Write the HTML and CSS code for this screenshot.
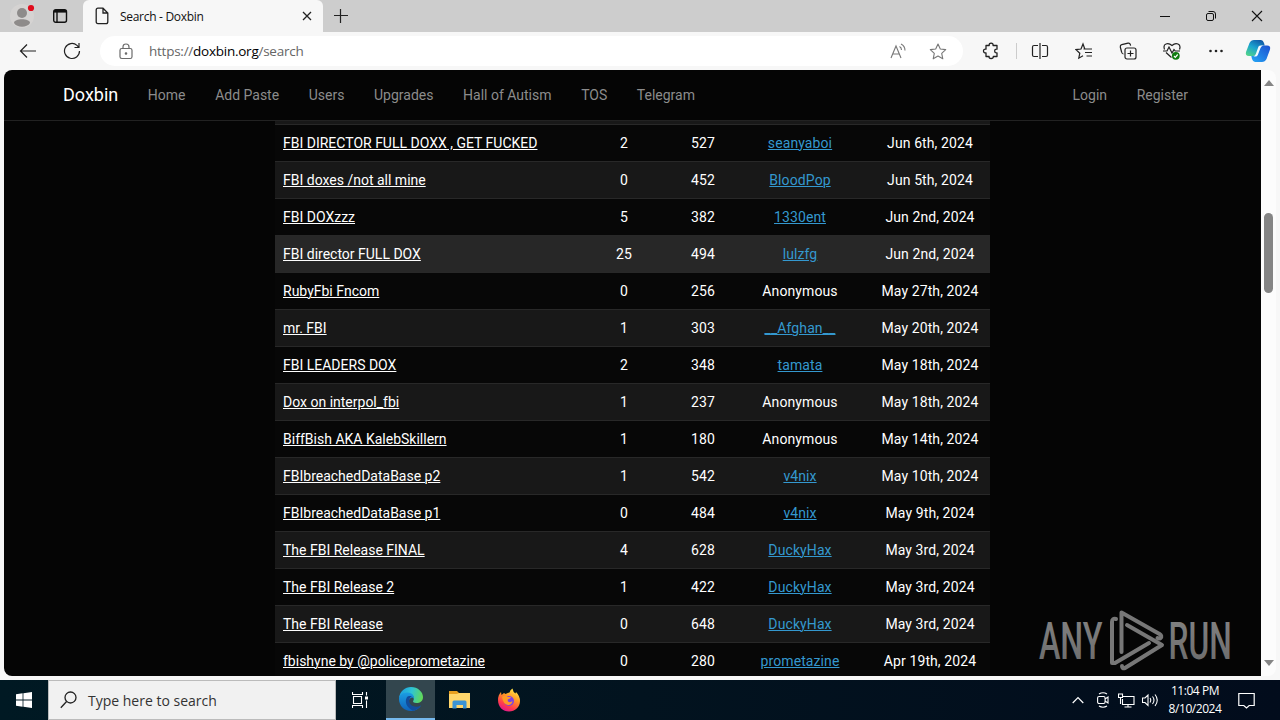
FILE: index.html
```html
<!DOCTYPE html>
<html lang="en">
<head>
    <meta charset="UTF-8">
    <meta name="viewport" content="width=device-width, initial-scale=1.0">
    <title>Search - Doxbin</title>
    <link rel="stylesheet" href="styles.css">
</head>
<body>
    <div class="desktop">
        <!-- Tab strip -->
        <div class="tab-strip">
            <div class="tab-tools">
                <svg class="profile" width="30" height="32" viewBox="0 0 30 32">
                    <circle cx="14" cy="16" r="12" fill="#d5d3d2"/>
                    <circle cx="14" cy="13" r="5" fill="#8e8b8a"/>
                    <path d="M6 23c0-5 16-5 16 0-3 5-13 5-16 0z" fill="#8e8b8a"/>
                    <circle cx="23" cy="8" r="3.1" fill="#e00b1c"/>
                </svg>
                <svg class="workspaces" width="16" height="16" viewBox="0 0 16 16" fill="none" stroke="#111" stroke-width="1.4">
                    <rect x="1.7" y="1.7" width="12.8" height="12.6" rx="2"/>
                    <path d="M2 3.3h12" stroke-width="2.6"/>
                    <path d="M5 4v10"/>
                </svg>
            </div>
            <div class="tab">
                <svg width="14" height="18" viewBox="0 0 14 18" fill="none" stroke="#222" stroke-width="1.3">
                    <path d="M1.2 3q0-1.8 1.8-1.8h5L12.8 6v8.7q0 1.9-1.8 1.9H3q-1.8 0-1.8-1.9zM8 1.3V6h4.7"/>
                </svg>
                <span class="tab-title">Search - Doxbin</span>
                <svg class="tab-close" width="10" height="10" viewBox="0 0 10 10" stroke="#222" stroke-width="1.3"><path d="M1 1l8 8M9 1l-8 8"/></svg>
            </div>
            <svg class="new-tab" width="14" height="14" viewBox="0 0 14 14" stroke="#222" stroke-width="1.2"><path d="M0 6.5h14M6.5 0v14"/></svg>
            <div class="window-buttons">
                <svg width="12" height="12" viewBox="0 0 12 12" stroke="#111"><path d="M1 6.5h10"/></svg>
                <svg width="12" height="12" viewBox="0 0 12 12" fill="none" stroke="#111"><rect x="1.5" y="3.5" width="7" height="7" rx="1.5"/><path d="M3.5 1.5H8q2.5 0 2.5 2.5v4.500"/></svg>
                <svg width="12" height="12" viewBox="0 0 12 12" stroke="#111" stroke-width="1.1"><path d="M1 1l10 10M11 1L1 11"/></svg>
            </div>
        </div>

        <!-- Address bar -->
        <div class="toolbar">
            <svg class="back" width="18" height="16" viewBox="0 0 18 16" fill="none" stroke="#222" stroke-width="1.2"><path d="M8 1.5L1.5 8 8 14.5M1.5 8H17"/></svg>
            <svg class="reload" width="18" height="18" viewBox="0 0 18 18" fill="none" stroke="#222" stroke-width="1.2"><path d="M16.5 9a7.5 7.5 0 1 1-2.5-5.6L16 5.5M16 1v4.5h-4.5"/></svg>
            <div class="address">
                <svg width="14" height="17" viewBox="0 0 14 17" fill="none" stroke="#6b6b6b" stroke-width="1.2"><rect x="1" y="5.5" width="12" height="10" rx="1.8"/><path d="M4 5.5V4q0-3 3-3t3 3v1.5"/><circle cx="7" cy="10.5" r=".7" fill="#555"/></svg>
                <span class="url">https://<b>doxbin.org</b>/search</span>
                <svg class="read-aloud" width="17" height="16" viewBox="0 0 17 16" fill="none" stroke="#777" stroke-width="1.1"><path d="M1 15L6 3l5 12M2.8 11h6.500M9.5 3.5q2 1 2 3.5M11 1q4 2 4 6.500"/></svg>
                <svg class="star" width="18" height="17" viewBox="0 0 18 17" fill="none" stroke="#777" stroke-width="1.1" stroke-linejoin="round"><path d="M9 1l2.3 5 5.4.6-4 3.700 1.100 5.500L9 13.100l-4.800 2.700 1.100-5.500-4-3.700L6.700 6z"/></svg>
            </div>
            <div class="actions">
                <svg width="18" height="18" viewBox="0 0 18 18" fill="none" stroke="#222" stroke-width="1.3" stroke-linejoin="round"><path d="M4 3.500h3.200q-.3-2.300 1.900-2.300t2 2.300H15v3.700q-2.300-.3-2.300 1.800t2.300 1.800v3.700h-3.700q.1 2-2.200 2t-2-2H4v-3.700q-2.500.2-2.500-1.900T4 7.200z"/></svg>
                <span class="divider"></span>
                <svg width="18" height="18" viewBox="0 0 18 18" fill="none" stroke="#222" stroke-width="1.2"><path d="M7 3.500H3q-1.500 0-1.500 1.500v8q0 1.500 1.500 1.500h4M11 3.500h4q1.500 0 1.500 1.500v8q0 1.500-1.500 1.500h-4M9 1v16"/></svg>
                <svg width="18" height="18" viewBox="0 0 18 18" fill="none" stroke="#222" stroke-width="1.2"><path d="M9.800 7L8 2 6 7l-5 .6 3.800 3.600-1 5L8 13.800M8.500 7h8.500M10 10.500h7M11.500 14H17"/></svg>
                <svg width="18" height="18" viewBox="0 0 18 18" fill="none" stroke="#222" stroke-width="1.2"><rect x="6" y="6" width="11" height="11" rx="2"/><path d="M11.500 8.500v6M8.500 11.500h6M4.500 12Q3 12 2.600 10L1.300 5Q1 3.200 2.800 2.700L9 1.200q1.800-.4 2.300 1.300l.3 1.200"/></svg>
                <svg width="20" height="18" viewBox="0 0 20 18" fill="none" stroke="#222" stroke-width="1.2"><path d="M1.500 7.500Q0 3 3 2t6 1.500Q12 .8 15 2t1.500 5.500M3 10.500l5.500 5M0 9h4l2-4 3 6 2-3.500 1.200 1.500H17"/><circle cx="12.800" cy="13.800" r="3.900" fill="#107c10" stroke="none"/><path d="M11 14l1.300 1.300 2.400-2.800" stroke="#fff"/></svg>
                <svg class="more" width="18" height="18" viewBox="0 0 18 18" fill="#222"><circle cx="3.500" cy="9" r="1.3"/><circle cx="9" cy="9" r="1.3"/><circle cx="14.500" cy="9" r="1.3"/></svg>
            </div>
            <svg class="copilot" width="26" height="24" viewBox="0 0 26 24">
                <defs>
                    <linearGradient id="cop-a" x1=".8" y1="0" x2=".2" y2="1"><stop offset="0" stop-color="#0f55a5"/><stop offset=".5" stop-color="#1aa3d0"/><stop offset="1" stop-color="#4fd28c"/></linearGradient>
                    <linearGradient id="cop-b" x1="1" y1="0" x2="0" y2="1"><stop offset="0" stop-color="#1c4fd0"/><stop offset="1" stop-color="#25a7f5"/></linearGradient>
                </defs>
                <path d="M4.500 4Q6 1 9 1h7q2 0 3 3l.7 2.500H17q-2 0-3 3L12 14q-1 3-4 3H4q-4 0-3-4z" fill="url(#cop-a)"/>
                <path d="M21.500 20q-1.500 3-4.500 3h-7q-2 0-3-3l-.7-3H9q2 0 3-3l1.500-4.500q1-3 4-3H22q4 0 3 4z" fill="url(#cop-b)"/>
                <path d="M13.500 7.500q.7-1 2.500-1h2q-1.700.5-2.500 2.500l-2.700 7q-.8 1.500-2.300 1.500H8.500q1.500-.5 2.300-2.500z" fill="#f2fbff"/>
            </svg>
        </div>

        <!-- Web page -->
        <div class="viewport">
            <div class="page">
                <nav class="navbar">
                    <a class="brand">Doxbin</a>
                    <a>Home</a>
                    <a>Add Paste</a>
                    <a>Users</a>
                    <a>Upgrades</a>
                    <a>Hall of Autism</a>
                    <a>TOS</a>
                    <a>Telegram</a>
                    <a class="nav-login">Login</a>
                    <a>Register</a>
                </nav>
                <div class="results">
                    <div class="cut-row"></div>
                    <div class="row"><a>FBI DIRECTOR FULL DOXX , GET FUCKED</a><span>2</span><span>527</span><a class="user">seanyaboi</a><span>Jun 6th, 2024</span></div>
                    <div class="row"><a>FBI doxes /not all mine</a><span>0</span><span>452</span><a class="user">BloodPop</a><span>Jun 5th, 2024</span></div>
                    <div class="row"><a>FBI DOXzzz</a><span>5</span><span>382</span><a class="user">1330ent</a><span>Jun 2nd, 2024</span></div>
                    <div class="row active"><a>FBI director FULL DOX</a><span>25</span><span>494</span><a class="user">lulzfg</a><span>Jun 2nd, 2024</span></div>
                    <div class="row"><a>RubyFbi Fncom</a><span>0</span><span>256</span><span>Anonymous</span><span>May 27th, 2024</span></div>
                    <div class="row"><a>mr. FBI</a><span>1</span><span>303</span><a class="user">__Afghan__</a><span>May 20th, 2024</span></div>
                    <div class="row"><a>FBI LEADERS DOX</a><span>2</span><span>348</span><a class="user">tamata</a><span>May 18th, 2024</span></div>
                    <div class="row"><a>Dox on interpol_fbi</a><span>1</span><span>237</span><span>Anonymous</span><span>May 18th, 2024</span></div>
                    <div class="row"><a>BiffBish AKA KalebSkillern</a><span>1</span><span>180</span><span>Anonymous</span><span>May 14th, 2024</span></div>
                    <div class="row"><a>FBIbreachedDataBase p2</a><span>1</span><span>542</span><a class="user">v4nix</a><span>May 10th, 2024</span></div>
                    <div class="row"><a>FBIbreachedDataBase p1</a><span>0</span><span>484</span><a class="user">v4nix</a><span>May 9th, 2024</span></div>
                    <div class="row"><a>The FBI Release FINAL</a><span>4</span><span>628</span><a class="user">DuckyHax</a><span>May 3rd, 2024</span></div>
                    <div class="row"><a>The FBI Release 2</a><span>1</span><span>422</span><a class="user">DuckyHax</a><span>May 3rd, 2024</span></div>
                    <div class="row"><a>The FBI Release</a><span>0</span><span>648</span><a class="user">DuckyHax</a><span>May 3rd, 2024</span></div>
                    <div class="row"><a>fbishyne by @policeprometazine</a><span>0</span><span>280</span><a class="user">prometazine</a><span>Apr 19th, 2024</span></div>
                </div>
            </div>
            <div class="scrollbar">
                <svg width="10" height="6" viewBox="0 0 10 6"><path d="M0 6l5-6 5 6z" fill="#858585"/></svg>
                <div class="thumb"></div>
                <svg width="10" height="6" viewBox="0 0 10 6"><path d="M0 0l5 6 5-6z" fill="#858585"/></svg>
            </div>
        </div>

        <!-- Taskbar -->
        <div class="taskbar">
            <div class="start">
                <svg width="16" height="16" viewBox="0 0 16 16" fill="#fff"><path d="M0 2.200l6.600-.9v6.300H0zM7.400 1.200L16 0v7.600H7.400zM0 8.400h6.600v6.300L0 13.800zM7.400 8.400H16V16l-8.600-1.200z"/></svg>
            </div>
            <div class="search-box">
                <svg width="17" height="18" viewBox="0 0 17 18" fill="none" stroke="#222" stroke-width="1.3"><circle cx="10.500" cy="6.500" r="5.500"/><path d="M6.600 10.500L.8 16.800"/></svg>
                <span>Type here to search</span>
            </div>
            <div class="task">
                <svg class="task-view" width="17" height="16" viewBox="0 0 17 16" fill="none" stroke="#fff" stroke-width="1.1"><path d="M.5 0v2.500h10V0M.5 16v-2.500h10V16M1.500 4.500h8v7h-8zM14.500 0v3.500M14.500 8.500V16"/><path d="M13 4.500h3v3h-3z" fill="#fff" stroke="none"/></svg>
            </div>
            <div class="task open">
                <svg width="24" height="24" viewBox="0 0 24 24">
                    <defs>
                        <linearGradient id="edge-a" x1="0" y1=".3" x2="1" y2=".5"><stop offset="0" stop-color="#1b9de2"/><stop offset=".5" stop-color="#2fc4d4"/><stop offset="1" stop-color="#62d957"/></linearGradient>
                        <linearGradient id="edge-b" x1="0" y1="0" x2="0" y2="1"><stop offset="0" stop-color="#1b9ee3"/><stop offset="1" stop-color="#0f62bb"/></linearGradient>
                    </defs>
                    <path d="M0 11C1 4 6 0 12 0c7 0 12 5 12 10 0 4-3 6-6.500 6-3 0-4-1.200-3.200-2.300C16 11 14 7 9.500 7 5 7 1.500 9 0 11z" fill="url(#edge-a)"/>
                    <path d="M0 12c0-4 4-7 9-6.500 4 .3 6.500 3 6 6.500-1-2-3-2-4.500 0-2.500 4 2 9.500 7 8.500 2-.3 3.500-1.300 4.500-2-2 3.500-5.500 5.500-10 5.500C5 24 0 18.500 0 12z" fill="url(#edge-b)"/>
                    <path d="M8 10c-3 5 0 11 6 13.700 3.500-.7 6.500-2.500 8-5.200-7 3.500-13-1-11.500-6.500.4-1.300 1.500-2.300 2.500-2.500-2-.8-4-.5-5 .5z" fill="#124c9b"/>
                </svg>
            </div>
            <div class="task">
                <svg width="22" height="20" viewBox="0 0 22 20"><path d="M0 1h8l2 2h11v4H0z" fill="#e8a020"/><path d="M0 4h8l2-1h11v15H0z" fill="#ffd66b"/><path d="M3.500 18.500V12q0-1.500 1.500-1.500h11q1.500 0 1.500 1.500v6.500H14V15H7.500v3.500z" fill="#3b94d4"/></svg>
            </div>
            <div class="task">
                <svg width="24" height="24" viewBox="0 0 24 24">
                    <defs><linearGradient id="fox" x1=".8" y1="0" x2=".3" y2="1"><stop offset="0" stop-color="#fff04a"/><stop offset=".4" stop-color="#ff9826"/><stop offset=".75" stop-color="#ff3b4c"/><stop offset="1" stop-color="#e01590"/></linearGradient></defs>
                    <path d="M1 12Q1 7 4 4l.5 3L7 5l1.500 1q2.500-1.500 4-1.500Q13 2 15.500.5q.5 3.500 3 5l.5-1.500q4 4 4 9c0 6-5 10.500-11 10.500S1 19 1 12z" fill="url(#fox)"/>
                    <circle cx="12" cy="13" r="5" fill="#7a42e5"/>
                    <path d="M5 9q3-2.500 6 0h3q-.5 2-3 2.300-1 2 1 2.700 2 .5 3.500-1Q15 17 11 17q-5-1-6-8z" fill="#ff9a25"/>
                </svg>
            </div>
            <div class="tray">
                <svg width="12" height="8" viewBox="0 0 12 8" fill="none" stroke="#fff" stroke-width="1.2"><path d="M.7 7L6 1.500 11.300 7"/></svg>
                <svg class="meet" width="12" height="16" viewBox="0 0 12 16" fill="none" stroke="#fff" stroke-width="1.1"><rect x=".6" y="4.500" width="7.500" height="7" rx="1.500"/><path d="M8 7l3-2v6L8 9M2 2q4-2.500 8 0M2 14q4 2.500 8 0"/></svg>
                <svg class="network" width="17" height="15" viewBox="0 0 17 15" fill="none" stroke="#fff" stroke-width="1.1"><path d="M5 3.500h11v8H4.500V6M10 11.500v2.500M6.500 14h7M.5 1h4v3.500h-4zM2.500 4.500V11"/></svg>
                <svg class="volume" width="17" height="14" viewBox="0 0 17 14" fill="none" stroke="#fff" stroke-width="1.1"><path d="M.5 5h2.500L6 2v10.500L3 9.500H.5zM8 5q1.500 2 0 4.500M10.500 3.500q3 3.500 0 7.500M13 1.500q4.500 5.500 0 11.500"/></svg>
                <div class="clock"><span>11:04 PM</span><span>8/10/2024</span></div>
                <svg width="17" height="17" viewBox="0 0 17 17" fill="none" stroke="#fff" stroke-width="1.2"><path d="M.8 1.500h15.400v12h-5L8.500 16l-2.700-2.500h-5z"/></svg>
            </div>
        </div>

        <!-- Watermark over the page -->
        <svg class="watermark" width="240" height="72" viewBox="0 0 240 72">
            <defs><linearGradient id="mark" x1="0" y1="0" x2="0" y2="1"><stop offset="0" stop-color="#858585"/><stop offset="1" stop-color="#686868"/></linearGradient></defs>
            <text transform="translate(2 51) scale(.62 1)">ANY</text>
            <text transform="translate(131.500 51) scale(.61 1)">RUN</text>
            <g fill="none" stroke="#777" stroke-width="4" stroke-linejoin="round" stroke-linecap="round">
                <path d="M84.500 44V4.500l38 21.500q3 2 1 4-1.500 1-3 0"/>
                <path d="M79 11q-4-1-4 3v41h3l34-20"/>
                <path d="M90 17l35 20-37 23q-3 1-3-2"/>
            </g>
        </svg>
    </div>
</body>
</html>
```
FILE: styles.css
```css
* {
    margin: 0;
    padding: 0;
    box-sizing: border-box;
}

body {
    width: 1280px;
    height: 720px;
    overflow: hidden;
    font-family: 'Open Sans', 'Noto Sans', sans-serif;
}

svg {
    display: block;
    flex-shrink: 0;
}

.desktop {
    position: relative;
    display: flex;
    flex-direction: column;
    height: 720px;
    background: #f7f7f7;
}

/* Browser */
.tab-strip {
    display: flex;
    align-items: center;
    height: 32px;
    background: #cdcdcd;
}

.tab-tools {
    display: flex;
    align-items: center;
    gap: 14px;
    width: 83px;
    height: 32px;
    padding-left: 8px;
}

.tab {
    display: flex;
    align-items: center;
    width: 240px;
    height: 32px;
    padding: 0 11px 0 12px;
    background: #f7f7f7;
    border-radius: 6px 6px 0 0;
}

.tab-title {
    margin-left: 11px;
    font-size: 12px;
    letter-spacing: -0.3px;
    color: #111;
}

.tab-close {
    margin-left: auto;
}

.new-tab {
    margin-left: 11px;
}

.window-buttons {
    display: flex;
    gap: 34px;
    margin-left: auto;
    padding-right: 17px;
}

.toolbar {
    display: flex;
    align-items: center;
    height: 38px;
    padding-left: 19px;
}

.reload {
    margin-left: 26px;
}

.address {
    display: flex;
    align-items: center;
    width: 863px;
    height: 30px;
    margin-left: 19px;
    padding: 0 16px 0 19px;
    background: #fff;
    border-radius: 15px;
}

.url {
    margin-left: 16px;
    font-size: 13.5px;
    letter-spacing: -0.25px;
    color: #666;
}

.url b {
    font-weight: 400;
    color: #000;
}

.read-aloud {
    margin-left: auto;
    margin-right: 22px;
}

.actions {
    display: flex;
    align-items: center;
    gap: 26px;
    margin-left: 19px;
}

.divider {
    width: 1px;
    height: 16px;
    margin: 0 -12px 0 -10px;
    background: #ccc;
}

.more {
    margin-left: -2px;
}

.copilot {
    margin-left: 20px;
}

.viewport {
    display: flex;
    width: 1272px;
    height: 606px;
    margin: 0 4px 4px;
    overflow: hidden;
    background: #fcfcfc;
    border-radius: 8px;
}

.page {
    width: 1257px;
    height: 606px;
    overflow: hidden;
    background: #050505;
    font-family: Roboto, sans-serif;
    font-size: 14px;
}

.scrollbar {
    display: flex;
    flex-direction: column;
    align-items: center;
    width: 15px;
    padding: 10px 0;
}

.thumb {
    width: 9px;
    height: 80px;
    margin: 127px 0 auto;
    background: #858585;
    border-radius: 5px;
}

/* Doxbin page */
.navbar {
    display: flex;
    align-items: center;
    height: 51px;
    padding: 0 73px 0 59px;
    border-bottom: 1px solid #222;
    color: #8c8c8c;
}

.navbar a {
    margin-right: 29.6px;
    white-space: nowrap;
}

.navbar a:last-child {
    margin-right: 0;
}

.navbar .brand {
    padding-bottom: 1px;
    font-size: 18px;
    color: #fff;
}

.navbar .nav-login {
    margin-left: auto;
}

.results {
    width: 715px;
    margin-left: 271px;
    color: #fff;
}

.cut-row {
    height: 3px;
    background: #181818;
}

.row {
    display: grid;
    grid-template-columns: 297px 104px 54px 140px 120px;
    align-items: center;
    height: 37px;
    border-top: 1px solid #282828;
    background: #070707;
    letter-spacing: 0.1px;
    text-align: center;
}

.row a {
    text-decoration: underline;
    text-decoration-thickness: 1px;
    text-underline-offset: 1px;
}

.row a:first-child {
    padding-left: 8px;
    letter-spacing: 0;
    text-align: left;
}

.row:nth-child(odd) {
    background: #181818;
}

.row.active {
    background: #272727;
}

.row .user {
    color: #3498cf;
}

/* Taskbar */
.taskbar {
    display: flex;
    height: 40px;
    background: linear-gradient(90deg, #001923, #02131f 50%, #020c1c);
    color: #fff;
}

.start {
    display: flex;
    align-items: center;
    justify-content: center;
    width: 48px;
}

.search-box {
    display: flex;
    align-items: center;
    width: 288px;
    margin-right: 1px;
    padding-left: 11px;
    border: 1px solid #bbb;
    background: #f1f1f1;
    font-size: 14px;
    color: #333;
}

.search-box span {
    margin-left: 11px;
}

.task {
    display: flex;
    align-items: center;
    justify-content: center;
    width: 49px;
}

.task-view {
    margin-right: 2px;
}

.task.open {
    background: #33464e;
    border-bottom: 2px solid #76b9ed;
}

.tray {
    display: flex;
    align-items: center;
    margin-left: auto;
    padding-right: 25px;
}

.meet {
    margin-left: 13px;
}

.network {
    margin-left: 9px;
}

.volume {
    margin-left: 7px;
}

.clock {
    display: flex;
    flex-direction: column;
    align-items: center;
    width: 54px;
    margin: 0 16px 0 9px;
    font-size: 12px;
    line-height: 18px;
    letter-spacing: -0.45px;
    white-space: nowrap;
}

.watermark {
    position: absolute;
    left: 1037px;
    top: 608px;
}

.watermark text {
    font-family: Roboto, sans-serif;
    font-size: 52px;
    font-weight: 500;
    fill: url(#mark);
}
```
